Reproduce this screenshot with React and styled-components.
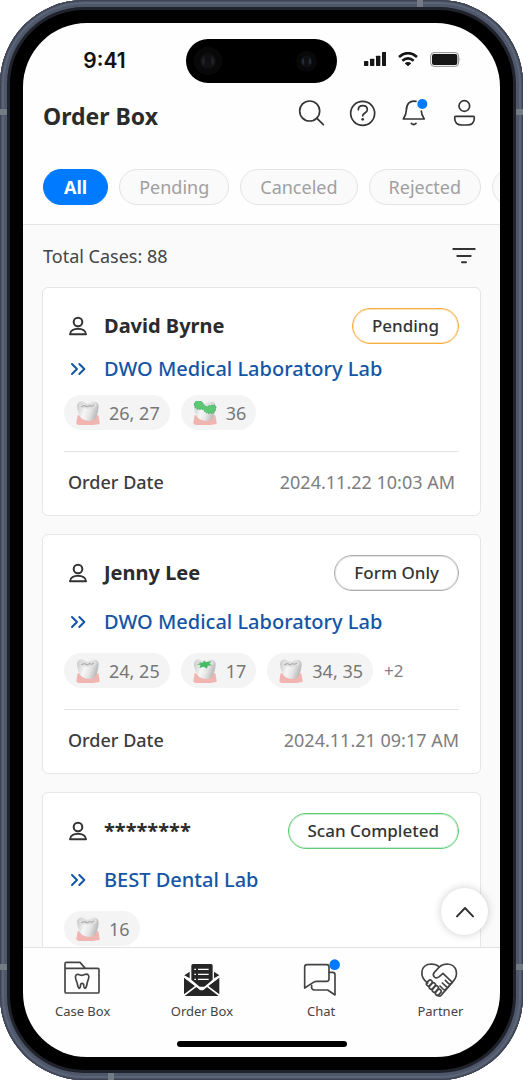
import React from "react";
import styled, { createGlobalStyle } from "styled-components";

const GlobalStyle = createGlobalStyle`
  *, *::before, *::after { box-sizing: border-box; }
  body { margin: 0; background: #fff; font-family: "Noto Sans", sans-serif; color: #333; }
  button { font-family: inherit; cursor: pointer; }
  h1, h2, p, ul { margin: 0; padding: 0; }
  svg { display: block; flex: none; }
`;

const Phone = styled.div`
  position: relative;
  height: 100vh;
  padding: 23px;
  border-radius: 84px;
  background: #000;
  box-shadow: inset 0 0 0 1px #3d4454, inset 0 0 0 2px #4b5364, inset 0 0 0 4px #5c6578,
    inset 0 0 0 7px #4f586b, inset 0 0 0 10px #20232b;
`;

const Antenna = styled.span`
  position: absolute;
  background: #737b85;
  width: ${(p) => (p.$side === "top" || p.$side === "bottom" ? "6px" : "7px")};
  height: ${(p) => (p.$side === "top" || p.$side === "bottom" ? "7px" : "6px")};
  ${(p) => p.$side}: 0;
  ${(p) => p.$edge}: ${(p) => p.$at}px;
`;

const Screen = styled.div`
  height: 100%;
  display: flex;
  flex-direction: column;
  overflow: hidden;
  border-radius: 64px;
  background: #fefefe;
`;

const StatusBar = styled.div`
  display: grid;
  grid-template-columns: 1fr 151px 1fr;
  align-items: center;
  padding-top: 16px;
`;

const Clock = styled.time`
  text-align: center;
  font: 600 21px/28px Inter, sans-serif;
  color: #111;
`;

const Island = styled.div`
  display: flex;
  align-items: center;
  justify-content: space-between;
  height: 44px;
  padding: 0 20px 0 8px;
  border-radius: 22px;
  background: #000;
`;

const StatusIcons = styled.div`
  display: flex;
  justify-content: center;
  align-items: center;
  gap: 12px;
  padding: 0 12px 4px 0;
`;

const Header = styled.header`
  display: flex;
  justify-content: space-between;
  align-items: flex-start;
  padding: 16px 22px 0 20px;
`;

const Title = styled.h1`
  font-size: 23px;
  line-height: 34px;
  font-weight: 700;
  color: #2b2b2b;
`;

const Actions = styled.div`
  display: flex;
  gap: 23px;
`;

const IconButton = styled.button`
  display: block;
  padding: 0;
  border: 0;
  background: none;
  color: #333;
`;

const Tabs = styled.nav`
  display: flex;
  gap: 11px;
  padding: 36px 0 19px 20px;
  border-bottom: 1px solid #e4e5e7;
  overflow: hidden;
`;

const Tab = styled.button`
  flex: none;
  height: 36px;
  min-width: 64px;
  padding: 0 ${(p) => (p.$active ? "20px" : "19px")};
  border: 1px solid ${(p) => (p.$active ? "#007aff" : "#e3e3e4")};
  border-radius: 18px;
  background: ${(p) => (p.$active ? "#007aff" : "#fafafa")};
  color: ${(p) => (p.$active ? "#fff" : "#a0a0a0")};
  font-size: 18px;
  line-height: 28px;
  font-weight: ${(p) => (p.$active ? 700 : 400)};
`;

const Content = styled.main`
  position: relative;
  flex: 1;
  min-height: 0;
  display: flex;
  flex-direction: column;
  background: #fafafa;
`;

const Scroller = styled.div`
  flex: 1;
  min-height: 0;
  overflow-y: auto;
  scrollbar-width: none;
`;

const Summary = styled.div`
  display: flex;
  justify-content: space-between;
  align-items: center;
  height: 62px;
  padding: 0 24px 0 20px;
  font-size: 18px;
  color: #444;
`;

const List = styled.ul`
  display: flex;
  flex-direction: column;
  gap: 18px;
  padding: 0 19px 18px;
  list-style: none;
`;

const Card = styled.li`
  padding: 20px 21px 19px;
  border: 1px solid #e6e5e7;
  border-radius: 6px;
  background: #fff;
`;

const CardRow = styled.div`
  display: flex;
  align-items: center;
  gap: 17px;
  padding-left: 5px;
`;

const Patient = styled.h2`
  flex: 1;
  font-size: 20px;
  line-height: 36px;
  font-weight: 700;
  color: #2b2b2b;
`;

const Badge = styled.span`
  height: 36px;
  padding: 0 19px;
  border: 1px solid ${(p) => p.$color};
  box-shadow: inset 0 0 0 1px ${(p) => p.$color}55;
  border-radius: 18px;
  font-size: 17px;
  line-height: 34px;
  font-weight: 500;
  color: #333;
`;

const LabRow = styled(CardRow)`
  margin: ${(p) => (p.$compact ? "11px 0 12px" : "17px 0")};
`;

const LabLink = styled.a`
  font-size: 20px;
  line-height: 28px;
  font-weight: 500;
  color: #1455a5;
  text-decoration: none;
`;

const Tags = styled.div`
  display: flex;
  align-items: center;
  gap: 11px;
  padding-bottom: 21px;
  border-bottom: 1px solid #e3e3e4;
`;

const Tag = styled.span`
  display: flex;
  align-items: center;
  gap: 9px;
  height: 35px;
  padding: 0 10px 0 12px;
  border-radius: 18px;
  background: #f4f4f4;
  font-size: 18px;
  color: #777;
`;

const More = styled.span`
  font-size: 17px;
  color: #808080;
`;

const DateRow = styled.div`
  display: flex;
  justify-content: space-between;
  padding: 16px ${(p) => (p.$compact ? "4px" : "0")} 0 4px;
  font-size: 18px;
  line-height: 28px;
  color: #7d7d7d;
`;

const DateLabel = styled.span`
  font-weight: 500;
  color: #3c3c3c;
`;

const TopButton = styled.button`
  position: absolute;
  right: 12px;
  bottom: 12px;
  width: 47px;
  height: 47px;
  display: grid;
  place-items: center;
  padding: 0;
  border: 0;
  border-radius: 50%;
  background: #fff;
  color: #333;
  box-shadow: 0 0 8px rgba(0, 0, 0, 0.2);
`;

const BottomBar = styled.footer`
  display: flex;
  flex-direction: column;
  align-items: center;
  gap: 20px;
  padding: 13px 0 10px;
  border-top: 1px solid #e2e1e3;
`;

const NavItems = styled.nav`
  width: 100%;
  display: grid;
  grid-template-columns: repeat(4, 1fr);
`;

const NavLink = styled.a`
  display: flex;
  flex-direction: column;
  align-items: center;
  gap: 4px;
  font-size: 13px;
  line-height: 20px;
  color: #444;
  text-decoration: none;
`;

const HomeIndicator = styled.div`
  width: 170px;
  height: 6px;
  border-radius: 3px;
  background: #000;
`;

const Lens = ({ size, tint }) => (
  <svg width={size} height={size} viewBox="0 0 28 28" aria-hidden="true">
    <circle cx="14" cy="14" r="14" fill="#080808" />
    <circle cx="14" cy="14" r="8" fill="#101012" />
    <path d="M10 9q-5 5 0 10q2-5 0-10M18 9q5 5 0 10q-2-5 0-10" fill={tint} />
  </svg>
);

const Line = ({ box, w, h, width = 5, children }) => (
  <svg
    width={w}
    height={h}
    viewBox={box}
    fill="none"
    stroke="currentColor"
    strokeWidth={width}
    strokeLinecap="round"
    strokeLinejoin="round"
    overflow="visible"
    aria-hidden="true"
  >
    {children}
  </svg>
);

const SearchIcon = () => (
  <Line box="108 297 84 84" w={28} h={28}>
    <circle cx="146" cy="333" r="30" />
    <path d="M168 355l19 19" />
  </Line>
);

const HelpIcon = () => (
  <Line box="261 297 84 84" w={28} h={28}>
    <circle cx="305" cy="340" r="36" />
    <path d="M292 329c0-16 27-16 27 0c0 10-14 10-14 19" />
    <circle cx="305" cy="358" r="4" fill="currentColor" stroke="none" />
  </Line>
);

const BellIcon = () => (
  <Line box="414 297 84 84" w={28} h={28}>
    <path d="M465 304c-18-4-29 8-29 27c0 12-4 18-9 26h63c-6-9-9-13-9-24" />
    <path d="M451 370q7 7 14 0" />
    <circle cx="484" cy="312" r="15" fill="#007aff" stroke="none" />
  </Line>
);

const ProfileIcon = () => (
  <Line box="567 297 84 84" w={28} h={28}>
    <circle cx="610" cy="318" r="16" />
    <path d="M584 349h53q3 0 3 4q0 22-22 22h-15q-22 0-22-22q0-4 3-4z" />
  </Line>
);

const FilterIcon = () => (
  <Line box="0 0 72 60" w={24} h={20} width={6}>
    <path d="M4 9h64M16 30h40M30 49h12" />
  </Line>
);

const PersonIcon = () => (
  <Line box="209 243 54 60" w={18} h={20} width={6}>
    <circle cx="236" cy="261" r="13" />
    <path d="M212 298c1-22 47-22 48 0z" />
  </Line>
);

const ForwardIcon = () => (
  <Line box="210 373 54 60" w={18} h={20} width={6}>
    <path stroke="#1455a5" d="M219 388l15 15-15 15M241 388l15 15-15 15" />
  </Line>
);

const UpIcon = () => (
  <Line box="0 0 60 60" w={20} h={20} width={6}>
    <path d="M6 43l24-25 24 25" />
  </Line>
);

const SignalIcon = () => (
  <svg width="22" height="14" viewBox="0 0 66 42" fill="#161616" aria-hidden="true">
    <rect y="27" width="13" height="15" rx="2" />
    <rect x="18" y="20" width="13" height="22" rx="2" />
    <rect x="36" y="11" width="13" height="31" rx="2" />
    <rect x="54" width="13" height="42" rx="2" />
  </svg>
);

const WifiIcon = () => (
  <svg width="20" height="14" viewBox="0 0 60 42" fill="none" stroke="#161616" strokeWidth="8" aria-hidden="true">
    <path d="M3 15q27-23 54 0M13 26q17-14 34 0" />
    <path d="M20 34q10-8 20 0l-10 9z" fill="#161616" stroke="none" />
  </svg>
);

const BatteryIcon = () => (
  <svg width="31" height="15" viewBox="0 0 93 45" aria-hidden="true">
    <rect x="2" y="2" width="84" height="41" rx="10" fill="none" stroke="#8d8d8d" strokeWidth="3" />
    <rect x="6" y="6" width="76" height="33" rx="6" fill="#161616" />
    <path d="M89 16q4 6 0 13z" fill="#777" />
  </svg>
);

const ToothIcon = ({ kind }) => (
  <svg width="24" height="24" viewBox="0 0 72 72" aria-hidden="true">
    <defs>
      <linearGradient id="enamel" x1="0" x2="1" y1="0" y2="0.3">
        <stop offset="0" stopColor="#c4c4c4" />
        <stop offset="0.45" stopColor="#f6f6f6" />
        <stop offset="0.7" stopColor="#e6e6e6" />
        <stop offset="1" stopColor="#bcbcbc" />
      </linearGradient>
    </defs>
    <path d="M5 42Q36 56 67 42L71 66Q72 70 66 70Q36 76 6 71Q0 70 1 65Z" fill="#f1b5b1" />
    <path
      d="M3 18C2 4 14-1 25 3Q35 6 44 3C58-1 69 4 68 18Q67 33 62 44Q57 59 40 60Q18 59 11 45Q4 32 3 18Z"
      fill="url(#enamel)"
    />
    <path d="M8 13q2-8 15-7q12 5 24 0q14-1 15 7q-2 10-26 10T8 13" fill="#dedede" />
    {kind === "crown" && (
      <path
        d="M4 10C5-3 22-6 29 5L33 12Q40 20 48 14L61 12Q70 13 69 22Q66 38 51 37Q36 38 31 25L14 25Q5 21 4 10Z"
        fill="#5cc774"
        stroke="#3faa5a"
        strokeWidth="3"
        strokeDasharray="4 4"
      />
    )}
    {kind === "inlay" && (
      <path
        d="M16 10l14 1 3-7 6 6 16-4-6 9 10 4-15 1-2 9-10-6-13 4 4-9-12-2 12-3z"
        fill="#45bb63"
      />
    )}
    {kind === "tooth" && (
      <path d="M16 17l9-3 9 3 7-3 6 2 7-4" fill="none" stroke="#a0a0a0" strokeWidth="3" />
    )}
  </svg>
);

const CaseBoxIcon = () => (
  <Line box="44 18 108 108" w={36} h={36}>
    <path d="M44 43V26q0-4 4-4h41l16 18h37q4 0 4 4v66q0 4-4 4H48q-4 0-4-4V40h61" />
    <path d="M83 58q11 6 22 0c8-2 12 4 10 12c-2 7-4 9-5 17q-2 12-6 13q-4 0-4-12q-5-6-9 0q-1 12-5 12q-3-2-5-13c-1-8-4-10-5-16c-2-8 1-14 7-13z" />
  </Line>
);

const OrderBoxIcon = () => (
  <svg width="36" height="36" viewBox="401 18 108 108" aria-hidden="true">
    <path d="M423 32q0-5 5-5h54q5 0 5 5v42l-25 21h-14l-25-21z" fill="#262626" />
    <g fill="#262626">
      <path d="M418 50v20l-16-9zM491 50v20l16-9z" />
      <path d="M401 68l33 25-33 25zM507 68l-33 25 33 25z" />
      <path d="M438 96l10 8q6 4 12 0l10-8 35 27H403z" />
    </g>
    <path d="M401 64l46 36q7 5 14 0l46-36" fill="none" stroke="#fff" strokeWidth="4" />
    <path
      d="M432 43h5M443 43h32M432 58h5M443 58h32M432 73h5M443 73h32"
      stroke="#fff"
      strokeWidth="4"
    />
  </svg>
);

const ChatIcon = () => (
  <Line box="40 18 108 108" w={36} h={36}>
    <path d="M45 99V36q0-7 7-7h59q7 0 7 7v36q0 7-7 7H80q-6 0-10 4z" />
    <path d="M118 52h11q7 0 7 7v61l-22-15H75q-11 0-9-14" />
    <circle cx="135" cy="29" r="16" fill="#007aff" stroke="none" />
  </Line>
);

const PartnerIcon = () => (
  <Line box="397 18 108 108" w={36} h={36}>
    <path d="M414 84C388 66 391 28 425 27q15 0 24 9q9-9 24-9C504 29 508 62 488 82L454 121q-5 5-10 0" />
    <path d="M449 36l-15 16q-6 8 0 14t15-1l11-10 28 27" />
    <path d="M483 86q-3 3-7-1l-9-9M478 93q-3 7-9 1l-11-10M470 101q-4 7-10 1l-9-9" />
    <rect x="-6" y="-10" width="12" height="20" rx="6" transform="translate(419 84) rotate(42)" />
    <rect x="-6" y="-11" width="12" height="22" rx="6" transform="translate(428 93) rotate(42)" />
    <rect x="-6" y="-11" width="12" height="22" rx="6" transform="translate(437 102) rotate(42)" />
    <rect x="-6" y="-10" width="12" height="20" rx="6" transform="translate(446 112) rotate(42)" />
  </Line>
);

const tabs = ["All", "Pending", "Canceled", "Rejected"];

const cases = [
  {
    name: "David Byrne",
    status: "Pending",
    color: "#f5ab3d",
    lab: "DWO Medical Laboratory Lab",
    teeth: [["tooth", "26, 27"], ["crown", "36"]],
    date: "2024.11.22 10:03 AM",
    compact: true,
  },
  {
    name: "Jenny Lee",
    status: "Form Only",
    color: "#adadad",
    lab: "DWO Medical Laboratory Lab",
    teeth: [["tooth", "24, 25"], ["inlay", "17"], ["tooth", "34, 35"]],
    more: "+2",
    date: "2024.11.21 09:17 AM",
  },
  {
    name: "********",
    status: "Scan Completed",
    color: "#5fcb74",
    lab: "BEST Dental Lab",
    teeth: [["tooth", "16"]],
  },
];

const navItems = [
  ["Case Box", CaseBoxIcon],
  ["Order Box", OrderBoxIcon],
  ["Chat", ChatIcon],
  ["Partner", PartnerIcon],
];

const CaseCard = ({ item }) => (
  <Card>
    <CardRow>
      <PersonIcon />
      <Patient>{item.name}</Patient>
      <Badge $color={item.color}>{item.status}</Badge>
    </CardRow>
    <LabRow $compact={item.compact}>
      <ForwardIcon />
      <LabLink href="#lab">{item.lab}</LabLink>
    </LabRow>
    <Tags>
      {item.teeth.map(([kind, label]) => (
        <Tag key={label}>
          <ToothIcon kind={kind} />
          {label}
        </Tag>
      ))}
      {item.more && <More>{item.more}</More>}
    </Tags>
    {item.date && (
      <DateRow $compact={item.compact}>
        <DateLabel>Order Date</DateLabel>
        <span>{item.date}</span>
      </DateRow>
    )}
  </Card>
);

export default function App() {
  return (
    <>
      <GlobalStyle />
      <Phone>
        <Antenna $side="left" $edge="top" $at={109} />
        <Antenna $side="right" $edge="top" $at={109} />
        <Antenna $side="top" $edge="right" $at={100} />
        <Antenna $side="left" $edge="bottom" $at={110} />
        <Antenna $side="right" $edge="bottom" $at={110} />
        <Antenna $side="bottom" $edge="left" $at={108} />
        <Screen>
          <StatusBar>
            <Clock>9:41</Clock>
            <Island>
              <Lens size={28} tint="#1f1f26" />
              <Lens size={21} tint="#1d2f42" />
            </Island>
            <StatusIcons>
              <SignalIcon />
              <WifiIcon />
              <BatteryIcon />
            </StatusIcons>
          </StatusBar>
          <Header>
            <Title>Order Box</Title>
            <Actions>
              <IconButton aria-label="Search"><SearchIcon /></IconButton>
              <IconButton aria-label="Help"><HelpIcon /></IconButton>
              <IconButton aria-label="Notifications"><BellIcon /></IconButton>
              <IconButton aria-label="Profile"><ProfileIcon /></IconButton>
            </Actions>
          </Header>
          <Tabs>
            {tabs.map((tab, i) => (
              <Tab key={tab} $active={i === 0}>{tab}</Tab>
            ))}
            <Tab aria-label="More filters" />
          </Tabs>
          <Content>
            <Scroller>
              <Summary>
                <p>Total Cases: 88</p>
                <IconButton aria-label="Filter"><FilterIcon /></IconButton>
              </Summary>
              <List>
                {cases.map((item) => (
                  <CaseCard key={item.name} item={item} />
                ))}
              </List>
            </Scroller>
            <TopButton aria-label="Back to top"><UpIcon /></TopButton>
          </Content>
          <BottomBar>
            <NavItems>
              {navItems.map(([label, Icon]) => (
                <NavLink key={label} href="#nav">
                  <Icon />
                  {label}
                </NavLink>
              ))}
            </NavItems>
            <HomeIndicator />
          </BottomBar>
        </Screen>
      </Phone>
    </>
  );
}
